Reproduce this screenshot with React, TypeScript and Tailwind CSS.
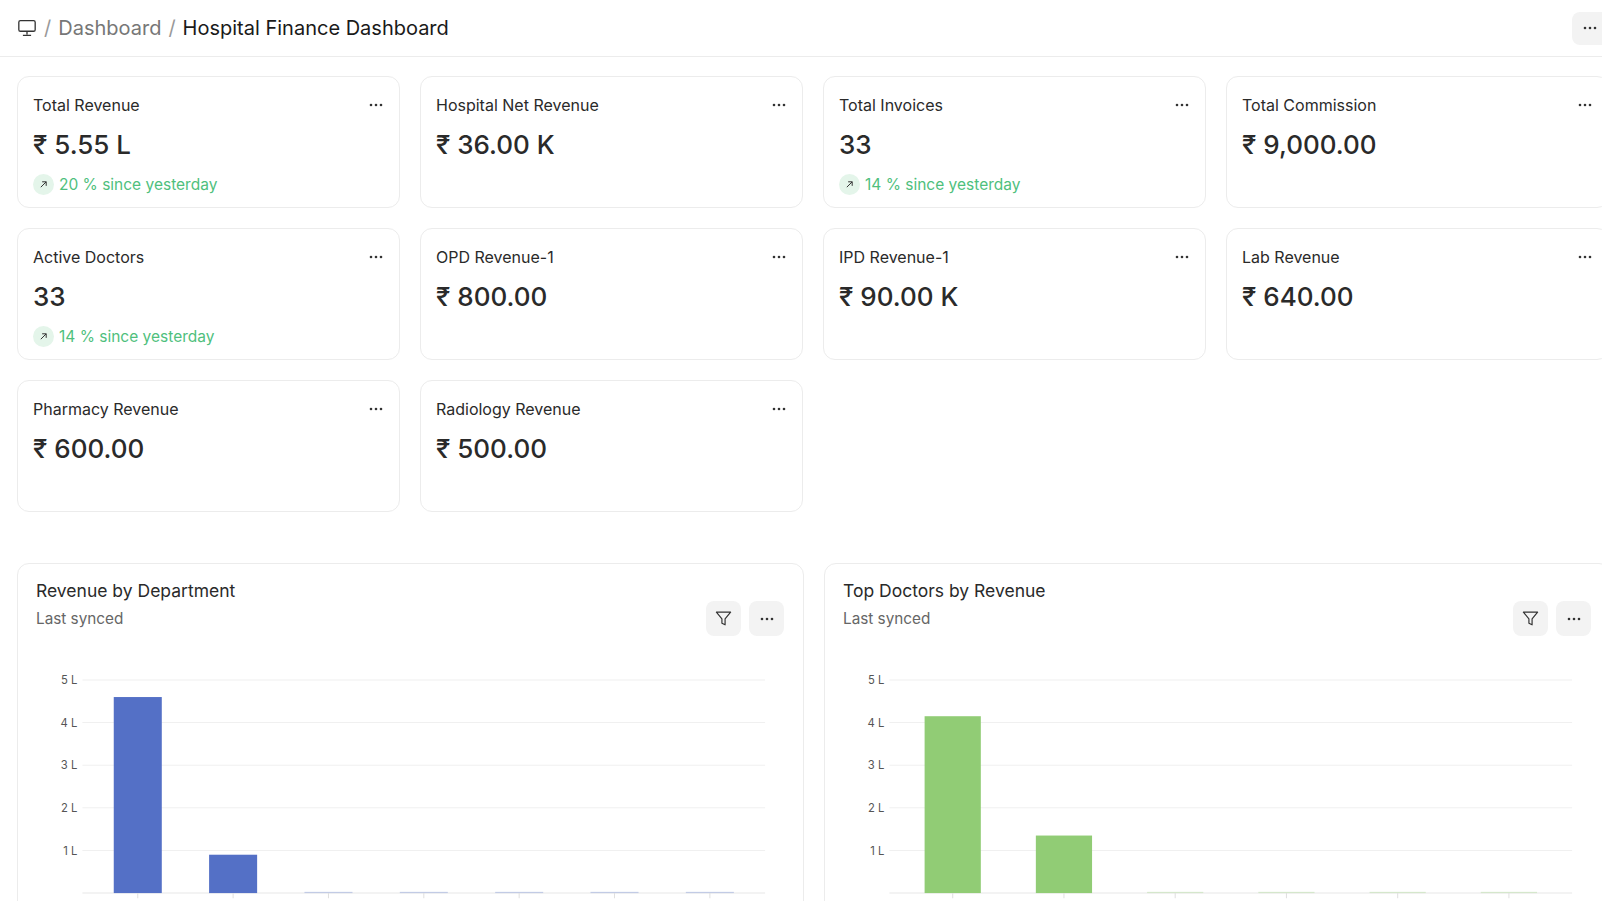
import React from "react";

const F = { fontFamily: "Inter, 'Noto Sans', sans-serif" };

function Dots({ cls = "" }: { cls?: string }) {
  return (
    <svg width="14" height="4" viewBox="0 0 14 4" className={cls}>
      <circle cx="2" cy="2" r="1.3" fill="#333" />
      <circle cx="7" cy="2" r="1.3" fill="#333" />
      <circle cx="12" cy="2" r="1.3" fill="#333" />
    </svg>
  );
}

type Card = { t: string; v: string; d?: string };
const cards: Card[] = [
  { t: "Total Revenue", v: "₹ 5.55 L", d: "20 % since yesterday" },
  { t: "Hospital Net Revenue", v: "₹ 36.00 K" },
  { t: "Total Invoices", v: "33", d: "14 % since yesterday" },
  { t: "Total Commission", v: "₹ 9,000.00" },
  { t: "Active Doctors", v: "33", d: "14 % since yesterday" },
  { t: "OPD Revenue-1", v: "₹ 800.00" },
  { t: "IPD Revenue-1", v: "₹ 90.00 K" },
  { t: "Lab Revenue", v: "₹ 640.00" },
  { t: "Pharmacy Revenue", v: "₹ 600.00" },
  { t: "Radiology Revenue", v: "₹ 500.00" },
];

function Stat({ c }: { c: Card }) {
  return (
    <div className="h-[132px] rounded-xl border border-[#ececec] bg-white px-[15px] pt-[16px]">
      <div className="flex items-center justify-between">
        <span className="text-[16px] text-[#2a2a2a]">{c.t}</span>
        <Dots cls="mr-[1px]" />
      </div>
      <div className="mt-[12px] text-[26px] font-medium text-[#2a2a2a] leading-[31px]">{c.v}</div>
      <div className="mt-[13px] flex items-center gap-[5px]">
        {c.d && (
          <>
            <span className="flex h-[21px] w-[21px] items-center justify-center rounded-full bg-[#e4f5ea]">
              <svg width="9" height="9" viewBox="0 0 10 10"><path d="M2 8 L8 2 M3.5 2 H8 V6.5" stroke="#333" strokeWidth="1.1" fill="none" /></svg>
            </span>
            <span className="text-[15.5px] text-[#4fbf7d]">{c.d}</span>
          </>
        )}
      </div>
    </div>
  );
}

function Chart({ title, labels, vals, color, bw }: { title: string; labels: string[]; vals: number[]; color: string; bw: number }) {
  const base = 322;
  const u = 41.7;
  const x0 = 70.5;
  const step = 93.3 * 7 / labels.length;
  return (
    <div className="h-[400px] w-[787px] shrink-0 rounded-xl border border-[#ececec] bg-white relative overflow-hidden">
      <svg width="787" height="400" viewBox="0 0 770 391.4" className="absolute left-0 top-0" style={{ fontFamily: "Inter, sans-serif" }}>
        {[1, 2, 3, 4, 5].map((k) => (
          <g key={k}>
            <line x1={63} x2={731} y1={base - k * u} y2={base - k * u} stroke="#f0f0f0" />
            <text x={58} y={base - k * u + 4} fontSize="11" fill="#555" textAnchor="end">{k} L</text>
          </g>
        ))}
        <line x1={63} x2={731} y1={base} y2={base} stroke="#e8e8e8" />
        {labels.map((l, i) => {
          const cx = x0 + step * (i + 0.5);
          const h = Math.max(vals[i] * u, 1.2);
          return (
            <g key={l + i}>
              <rect x={cx - bw / 2} y={base - h} width={bw} height={h} fill={color} opacity={vals[i] > 0.05 ? 1 : 0.3} />
              <line x1={cx} x2={cx} y1={base} y2={base + 5} stroke="#e0e0e0" />
              <text x={cx} y={base + 25} fontSize="12" fill="#444" textAnchor="middle">{l}</text>
            </g>
          );
        })}
      </svg>
      <div className="relative flex items-start justify-between pl-[18px] pr-[19px] pt-[14px]">
        <div>
          <div className="text-[17.5px] text-[#2a2a2a]">{title}</div>
          <div className="mt-[4px] text-[15.3px] text-[#666]">Last synced</div>
        </div>
        <div className="mt-[23px] flex gap-[8px]">
          <button className="flex h-[35px] w-[35px] items-center justify-center rounded-lg bg-[#f3f3f3]">
            <svg width="19" height="19" viewBox="0 0 24 24" fill="none" stroke="#333" strokeWidth="1.5" strokeLinejoin="round"><path d="M3 4h18l-7 8.5V20l-4-2v-5.5z" /></svg>
          </button>
          <button className="flex h-[35px] w-[35px] items-center justify-center rounded-lg bg-[#f3f3f3]"><Dots /></button>
        </div>
      </div>
    </div>
  );
}

export default function App() {
  return (
    <div className="h-[901px] w-[1602px] overflow-hidden bg-white" style={F}>
      <div className="flex h-[57px] items-center justify-between border-b border-[#ececec] pl-[17px]">
        <div className="flex items-center gap-[7px] text-[20px]">
          <svg width="20" height="18" viewBox="0 0 24 22" fill="none" stroke="#333" strokeWidth="1.6"><rect x="2" y="2" width="20" height="13" rx="2" /><path d="M12 15v4M7 20h10" /></svg>
          <span className="text-[#999]">/</span>
          <span className="text-[#777]">Dashboard</span>
          <span className="text-[#999]">/</span>
          <span className="text-[#1a1a1a]">Hospital Finance Dashboard</span>
        </div>
        <button className="flex h-[33px] w-[50px] mr-[-20px] items-center justify-start rounded-lg bg-[#f3f3f3] pl-[11px]">
          <Dots />
        </button>
      </div>
      <div className="grid w-[1620px] grid-cols-[383px_383px_383px_383px] gap-x-[20px] gap-y-[20px] pl-[17px] pt-[19px]">
        {cards.map((c) => <Stat key={c.t} c={c} />)}
      </div>
      <div className="flex w-[1620px] gap-[20px] pl-[17px] pt-[51px]">
        <Chart title="Revenue by Department" labels={["null", "IPD ...", "OPD ...", "Pha ...", "OPD ...", "Rad ...", "Lab ..."]} vals={[4.6, 0.9, 0, 0, 0, 0, 0]} color="#5470c6" bw={47} />
        <Chart title="Top Doctors by Revenue" labels={["null", "Jame ...", "Char ...", "Dr N ...", "Will ...", "Dr Adam"]} vals={[4.15, 1.35, 0, 0, 0, 0]} color="#91cc75" bw={55} />
      </div>
    </div>
  );
}
